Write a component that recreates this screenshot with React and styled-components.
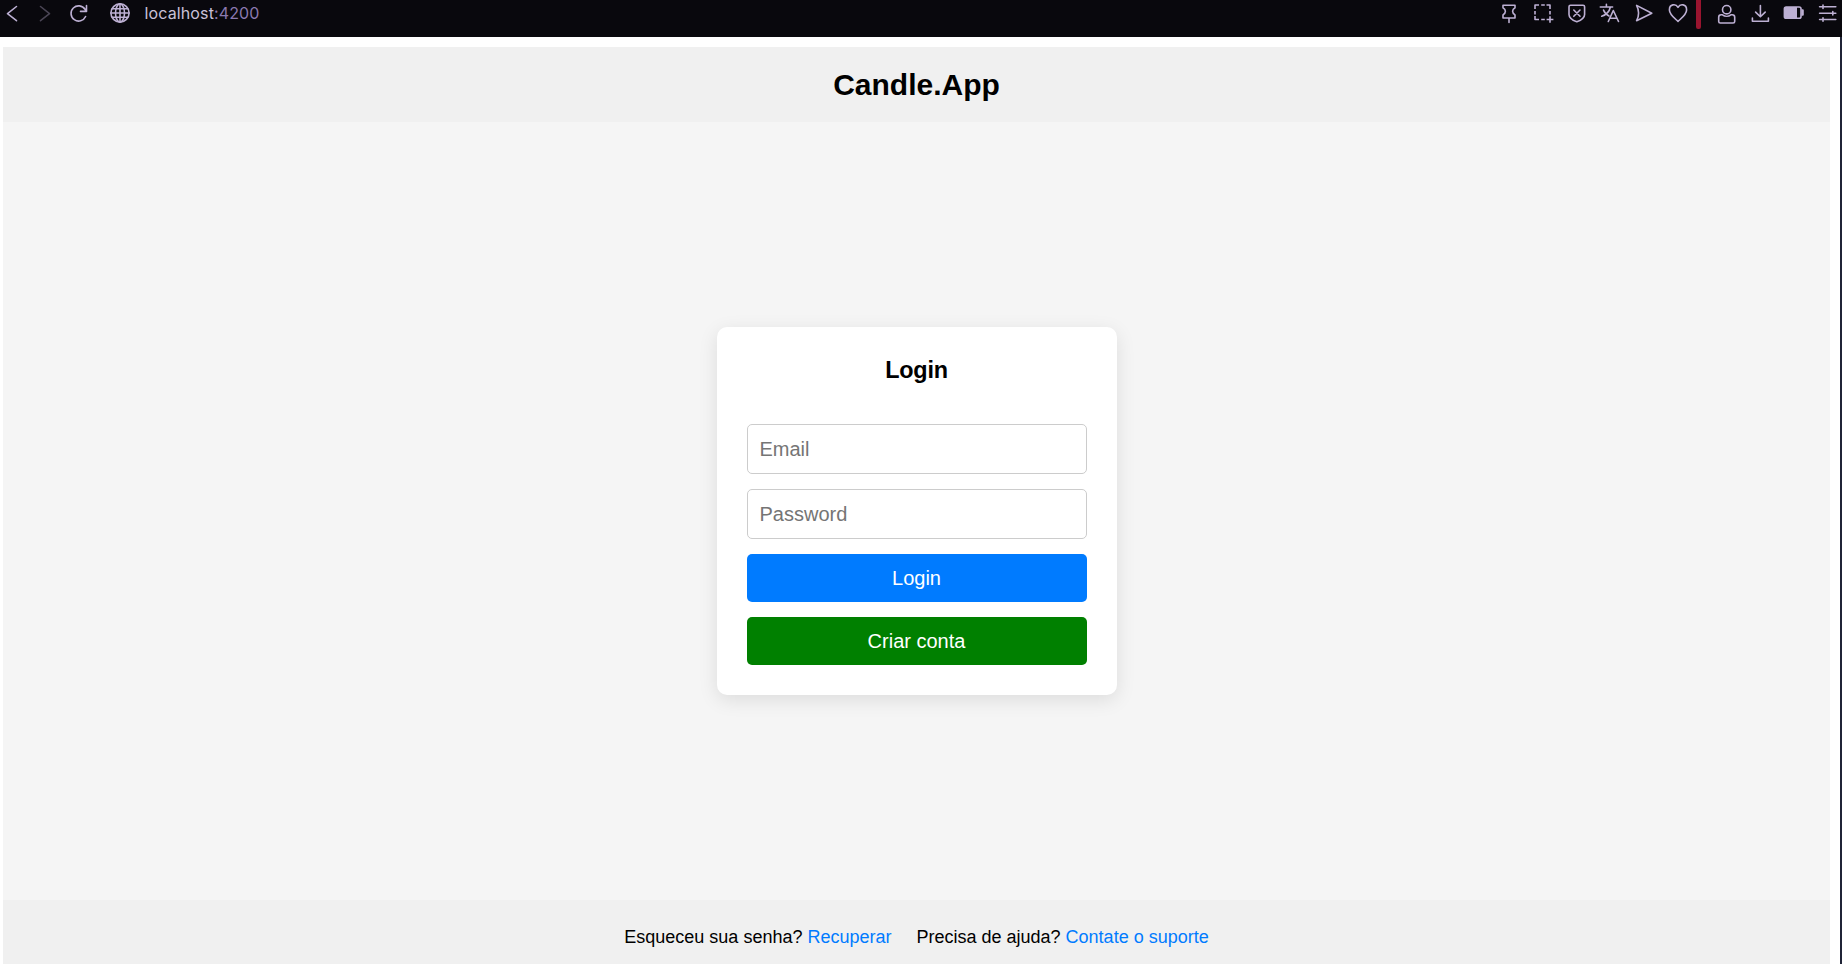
import React from "react";
import styled, { createGlobalStyle } from "styled-components";

const GlobalStyle = createGlobalStyle`
  * { box-sizing: border-box; }
  body {
    margin: 0;
    background: #fff;
    color: #000;
    font-family: "Liberation Sans", Arial, sans-serif;
    overflow: hidden;
  }
`;

const Browser = styled.div`
  display: flex;
  flex-direction: column;
  height: 964px;
`;

const Toolbar = styled.div`
  display: flex;
  align-items: flex-start;
  justify-content: space-between;
  flex: none;
  height: 37px;
  padding: 0 2px 0 0;
  background: #09080d;
  color: #bdb0d3;
`;

const ToolGroup = styled.div`
  display: flex;
  gap: ${(p) => p.$gap || "0"};
`;

const Svg = styled.svg`
  display: block;
  flex: none;
  width: 24px;
  height: 28px;
  margin-left: ${(p) => p.$left || "0"};
  fill: none;
  stroke: currentColor;
  stroke-width: 1.6;
  stroke-linecap: round;
  stroke-linejoin: round;
  opacity: ${(p) => (p.$dim ? 0.36 : 1)};
`;

const Icon = ({ children, left, dim }) => (
  <Svg viewBox="0 0 24 28" $left={left} $dim={dim} aria-hidden="true">
    {children}
  </Svg>
);

const Address = styled.div`
  margin-left: 12.5px;
  font: 400 16px/26px Inter, sans-serif;
  letter-spacing: 0.13px;
  color: #c9c1d8;
`;

const Port = styled.span`
  color: #8a79b0;
`;

const Marker = styled.div`
  width: 5px;
  height: 29px;
  margin: 0 14px 0 6px;
  border-radius: 0 0 2px 2px;
  background: #99142f;
`;

const Viewport = styled.div`
  display: flex;
  flex: 1;
  min-height: 0;
  padding: 10px 10px 0 3px;
  border-right: 2px solid #202437;
`;

const Page = styled.div`
  display: flex;
  flex-direction: column;
  flex: 1;
`;

const Header = styled.header`
  display: flex;
  align-items: center;
  justify-content: center;
  height: 75px;
  background: #f0f0f0;
`;

const Brand = styled.h1`
  margin: 0;
  font-size: 30px;
  line-height: 34px;
`;

const Main = styled.main`
  display: flex;
  align-items: center;
  justify-content: center;
  flex: 1;
  background: #f5f5f5;
`;

const Card = styled.form`
  display: flex;
  flex-direction: column;
  gap: 15px;
  width: 400px;
  height: 368px;
  padding: 30px;
  border-radius: 10px;
  background: #fff;
  box-shadow: 0 5px 19px rgba(0, 0, 0, 0.1);
`;

const Title = styled.h2`
  height: 52px;
  margin: 0;
  font-size: 23.4px;
  letter-spacing: -0.2px;
  line-height: 27px;
  text-align: center;
`;

const Field = styled.input`
  width: 100%;
  height: 50px;
  padding: 12px;
  border: 1px solid #ccc;
  border-radius: 5px;
  background: #fff;
  font: 20px/24px "Liberation Sans", Arial, sans-serif;

  &::placeholder { color: #757575; }
`;

const Button = styled.button`
  height: 48px;
  padding: 0;
  border: 0;
  border-radius: 5px;
  background: ${(p) => p.$color};
  color: #fff;
  font: 20px/24px "Liberation Sans", Arial, sans-serif;
`;

const Footer = styled.footer`
  display: flex;
  justify-content: center;
  gap: 25px;
  height: 64px;
  padding-top: 27px;
  background: #f0f0f0;
  font-size: 18px;
  line-height: 21px;
`;

const Hint = styled.p`
  margin: 0;
`;

const Link = styled.a`
  color: #007bff;
  text-decoration: none;
`;

export default function App() {
  return (
    <Browser>
      <GlobalStyle />
      <Toolbar>
        <ToolGroup>
          <Icon><path d="M16.5 6.5 7.5 13.7l9 7" /></Icon>
          <Icon left="9px" dim><path d="m7.5 6.5 9 7.2-9 7" /></Icon>
          <Icon left="10px">
            <path d="M18.6 16.5a7.6 7.6 0 1 1-.6-7.2l1.3 1.9M19.5 5.5v5.9h-6" />
          </Icon>
          <Icon left="17px">
            <circle cx="12" cy="13" r="9.1" />
            <ellipse cx="12" cy="13" rx="4.5" ry="9.1" />
            <path d="M12 4v18M2.9 13h18.2M4.3 8.8h15.4M4.3 17.2h15.4" />
          </Icon>
          <Address>localhost<Port>:4200</Port></Address>
        </ToolGroup>
        <ToolGroup>
          <ToolGroup $gap="9.75px">
            <Icon>
              <path d="M6 5.2h12v2.5c-3.2 2-3.2 5.3 0 7.2V18H6v-3.1c3.2-1.9 3.2-5.2 0-7.2zM12 18v4.5" />
            </Icon>
            <Icon>
              <path strokeLinecap="butt" d="M4 9V5h4M10.2 5h3.6M15.5 5h3.5v4M19 11v3.5M4 11v3.5M4 16v3.5h4M10.2 19.5h3.6M19 16.3v6.4M15.6 19.5h6.8" />
            </Icon>
            <Icon>
              <path d="M5.5 5.2h12.5q1.6 0 1.6 1.6v7.7c0 4-4.8 6.2-7.8 7.3-3-1.1-7.8-3.3-7.8-7.3V6.8q0-1.6 1.5-1.6zM8.8 10l6.2 6.3M15 10l-6.2 6.3" />
            </Icon>
            <Icon>
              <path d="M2.3 7h12.3M8.4 4.2V7M12.4 7c-1 4.5-4.8 8-8.7 9.3M5.5 10c1 2.8 3 4.7 5.5 6M10.3 21.5l5-11 5.2 11M12 18.2h6.8" />
            </Icon>
            <Icon>
              <path d="m4.6 5.4 15.2 7.8-15.2 7.5c2.6-4.8 2.6-10.2 0-15.3z" />
            </Icon>
            <Icon>
              <path d="M12 21.5c-1.5-1.8-8.6-6.7-8.6-11.6C3.4 3.8 9.8 3.4 12 7.3c2.2-3.9 8.6-3.5 8.6 2.6 0 4.9-7.1 9.8-8.6 11.6z" />
            </Icon>
          </ToolGroup>
          <Marker />
          <ToolGroup $gap="9.75px">
            <Icon>
              <circle cx="11.7" cy="9.7" r="4.2" />
              <path d="M7.5 14.8H6.2c-1.7 0-2.5 1-2.5 2.5v4.1q0 1.6 1.6 1.6h12.8q1.6 0 1.6-1.6v-4.1c0-1.5-.8-2.5-2.5-2.5h-1.3c-2.4 1.9-6 1.9-8.4 0z" />
            </Icon>
            <Icon>
              <path d="M11.4 5.5v11.3m-4.8-4.7 4.8 4.7 4.8-4.7M3.4 18v3.3h16V18" />
            </Icon>
            <Icon>
              <rect x="2.4" y="7" width="16.6" height="11.2" rx="1.8" />
              <path fill="currentColor" stroke="none" d="M2.6 7h12.4v11H2.6zM19.3 9.3H20.8q1 0 1 1v4.4q0 1-1 1h-1.5z" />
            </Icon>
            <Icon>
              <path d="M3.6 6.7h16.2M3.6 13.2h16.2M3.6 19.5h16.2M7 5v3.4M16.8 11.5v3.4M7 17.8v3.4" />
            </Icon>
          </ToolGroup>
        </ToolGroup>
      </Toolbar>
      <Viewport>
        <Page>
          <Header><Brand>Candle.App</Brand></Header>
          <Main>
            <Card>
              <Title>Login</Title>
              <Field type="email" placeholder="Email" />
              <Field type="password" placeholder="Password" />
              <Button type="button" $color="#007bff">Login</Button>
              <Button type="button" $color="#008000">Criar conta</Button>
            </Card>
          </Main>
          <Footer>
            <Hint>Esqueceu sua senha? <Link>Recuperar</Link></Hint>
            <Hint>Precisa de ajuda? <Link>Contate o suporte</Link></Hint>
          </Footer>
        </Page>
      </Viewport>
    </Browser>
  );
}
